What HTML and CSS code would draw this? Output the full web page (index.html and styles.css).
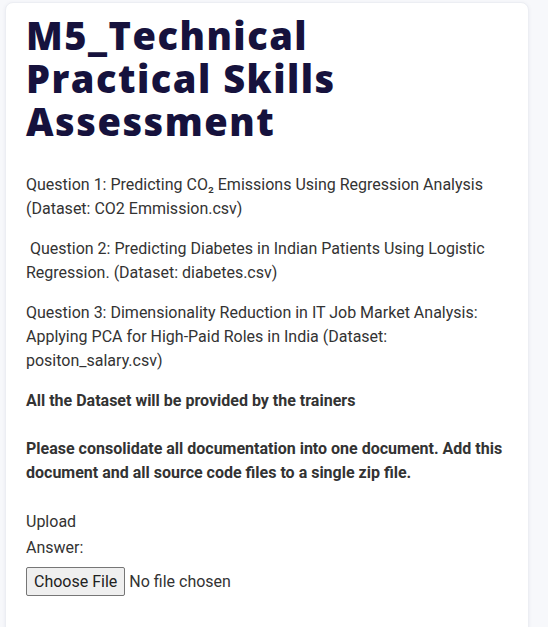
FILE: index.html
```html
<!DOCTYPE html>
<html>
<head>
<meta charset="utf-8">
<link rel="stylesheet" href="styles.css">
</head>
<body>
<div class="card">
  <h1 class="title">M5_Technical Practical Skills Assessment</h1>
  <div class="content">
    <p>Question 1: Predicting CO₂ Emissions Using Regression Analysis (Dataset: CO2 Emmission.csv)</p>
    <p>&nbsp;Question 2: Predicting Diabetes in Indian Patients Using Logistic Regression. (Dataset: diabetes.csv)</p>
    <p>Question 3: Dimensionality Reduction in IT Job Market Analysis: Applying PCA for High-Paid Roles in India (Dataset: positon_salary.csv)</p>
    <p class="bold">All the Dataset will be provided by the trainers<br><br>Please consolidate all documentation into one document. Add this document and all source code files to a single zip file.</p>
  </div>
  <div class="upload">
    <label class="upload-label" for="f">Upload<br>Answer:</label>
    <input class="file" type="file" id="f">
  </div>
</div>
</body>
</html>
```
FILE: styles.css
```css
html, body {
  margin: 0;
  padding: 0;
  background: #f7f8fb;
}
body {
  padding: 2px 19px 0 5px;
  font-family: Roboto, "Liberation Sans", sans-serif;
  color: #333;
  height: 625px;
  overflow: hidden;
}
.card {
  background: #fff;
  border: 1px solid #eceef3;
  border-radius: 8px;
  box-shadow: 0 1px 4px rgba(30, 40, 80, 0.06);
  padding: 11px 20px 40px 20px;
  min-height: 640px;
}
.title {
  margin: 0 0 30px 0;
  font-family: "Open Sans", Inter, sans-serif;
  font-weight: 800;
  font-size: 38px;
  line-height: 43px;
  letter-spacing: 1.5px;
  color: #16123d;
  width: 340px;
}
.content p {
  margin: 0 0 16px 0;
  font-size: 16px;
  line-height: 24px;
}
.content .bold {
  font-weight: 700;
  margin-bottom: 24px;
}
.upload-label {
  display: block;
  font-size: 16px;
  line-height: 26px;
}
.file {
  margin-top: 6px;
  font-family: Roboto, "Liberation Sans", sans-serif;
  font-size: 16px;
  color: #333;
}
.file::file-selector-button {
  font-family: Roboto, "Liberation Sans", sans-serif;
  font-size: 16px;
  color: #222;
  padding: 4px 7px;
  margin-right: 4px;
  background: #efefef;
  border: 1px solid #767676;
  border-radius: 2px;
}
```
